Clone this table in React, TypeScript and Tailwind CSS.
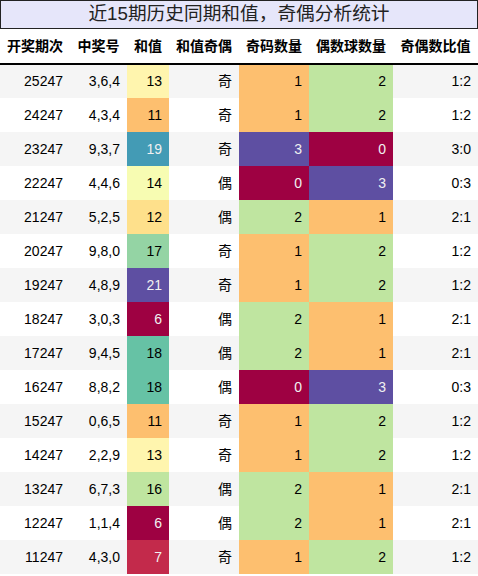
import React from "react";

type Row = [string, string, number, string, number, number, string];

const rows: Row[] = [
  ["25247", "3,6,4", 13, "奇", 1, 2, "1:2"],
  ["24247", "4,3,4", 11, "奇", 1, 2, "1:2"],
  ["23247", "9,3,7", 19, "奇", 3, 0, "3:0"],
  ["22247", "4,4,6", 14, "偶", 0, 3, "0:3"],
  ["21247", "5,2,5", 12, "偶", 2, 1, "2:1"],
  ["20247", "9,8,0", 17, "奇", 1, 2, "1:2"],
  ["19247", "4,8,9", 21, "奇", 1, 2, "1:2"],
  ["18247", "3,0,3", 6, "偶", 2, 1, "2:1"],
  ["17247", "9,4,5", 18, "偶", 2, 1, "2:1"],
  ["16247", "8,8,2", 18, "偶", 0, 3, "0:3"],
  ["15247", "0,6,5", 11, "奇", 1, 2, "1:2"],
  ["14247", "2,2,9", 13, "奇", 1, 2, "1:2"],
  ["13247", "6,7,3", 16, "偶", 2, 1, "2:1"],
  ["12247", "1,1,4", 6, "偶", 2, 1, "2:1"],
  ["11247", "4,3,0", 7, "奇", 1, 2, "1:2"],
];

const spectral: [number, number, number][] = [
  [158, 1, 66],
  [213, 62, 79],
  [244, 109, 67],
  [253, 174, 97],
  [254, 224, 139],
  [255, 255, 191],
  [230, 245, 152],
  [171, 221, 164],
  [102, 194, 165],
  [50, 136, 189],
  [94, 79, 162],
];

function colorAt(t: number): { bg: string; fg: string } {
  const x = Math.max(0, Math.min(1, t)) * 10;
  const i = Math.min(9, Math.floor(x));
  const f = x - i;
  const a = spectral[i];
  const b = spectral[i + 1];
  const c = a.map((v, k) => Math.round(v + (b[k] - v) * f));
  const lin = c.map((v) => {
    const s = v / 255;
    return s <= 0.04045 ? s / 12.92 : Math.pow((s + 0.055) / 1.055, 2.4);
  });
  const lum = 0.2126 * lin[0] + 0.7152 * lin[1] + 0.0722 * lin[2];
  return {
    bg: `rgb(${c[0]},${c[1]},${c[2]})`,
    fg: lum < 0.408 ? "#f1f1f1" : "#000000",
  };
}

const headers = ["开奖期次", "中奖号", "和值", "和值奇偶", "奇码数量", "偶数球数量", "奇偶数比值"];
const widths = ["w-[70px]", "w-[57px]", "w-[42px]", "w-[70px]", "w-[70px]", "w-[84px]", "w-[85px]"];

export default function App() {
  return (
    <div
      className="w-[478px] h-[576px] bg-white text-black overflow-hidden"
      style={{ fontFamily: '"Liberation Sans", Arial, "Noto Sans CJK SC", sans-serif' }}
    >
      <div className="h-[29px] border border-[#222] bg-[#e6e6fa] flex items-center justify-center text-[18.7px] text-[#222] leading-none">
        近15期历史同期和值，奇偶分析统计
      </div>
      <table className="border-collapse table-fixed w-[478px] text-[14px]">
        <colgroup>
          {widths.map((w, i) => (
            <col key={i} className={w} />
          ))}
        </colgroup>
        <thead>
          <tr className="h-[35px] border-b-2 border-black">
            {headers.map((h) => (
              <th key={h} className="px-[7px] font-bold text-center align-middle whitespace-nowrap">
                {h}
              </th>
            ))}
          </tr>
        </thead>
        <tbody>
          {rows.map((r, idx) => {
            const s = colorAt((r[2] - 6) / 15);
            const q = colorAt(r[4] / 3);
            const o = colorAt(r[5] / 3);
            return (
              <tr key={r[0]} className={`h-[34px] ${idx % 2 === 0 ? "bg-[#f5f5f5]" : "bg-white"}`}>
                <td className="px-[7px] text-right align-middle">{r[0]}</td>
                <td className="px-[7px] text-right align-middle">{r[1]}</td>
                <td className="px-[7px] text-right align-middle" style={{ backgroundColor: s.bg, color: s.fg }}>
                  {r[2]}
                </td>
                <td className="px-[7px] text-right align-middle">{r[3]}</td>
                <td className="px-[7px] text-right align-middle" style={{ backgroundColor: q.bg, color: q.fg }}>
                  {r[4]}
                </td>
                <td className="px-[7px] text-right align-middle" style={{ backgroundColor: o.bg, color: o.fg }}>
                  {r[5]}
                </td>
                <td className="px-[7px] text-right align-middle">{r[6]}</td>
              </tr>
            );
          })}
        </tbody>
      </table>
    </div>
  );
}
